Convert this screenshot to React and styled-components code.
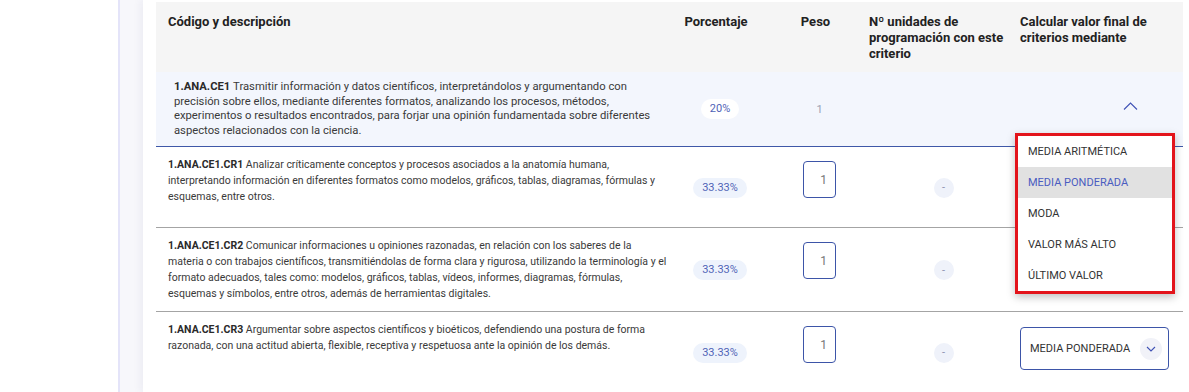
import React from "react";
import styled, { createGlobalStyle } from "styled-components";

const GlobalStyle = createGlobalStyle`
  html, body { margin: 0; padding: 0; background: #fff; }
  body { font-family: Roboto, "Liberation Sans", Arial, sans-serif; -webkit-font-smoothing: antialiased; }
  * { box-sizing: border-box; }
`;

const Page = styled.div`
  display: flex;
  height: 392px;
  overflow: hidden;
  background: #fff;
`;

const LeftBlank = styled.div`
  width: 118px;
  flex: none;
  background: #fff;
`;

const SidebarEdge = styled.div`
  width: 2px;
  flex: none;
  background: #e4e4f9;
`;

const Main = styled.div`
  flex: 1;
  display: flex;
  background: #f7f7fb;
  padding-left: 23px;
  min-width: 0;
`;

const Card = styled.div`
  flex: 1;
  background: #fff;
  box-shadow: -3px 0 8px rgba(40, 40, 90, 0.05);
  padding: 2px 6px 0 13px;
`;

const Table = styled.div`
  position: relative;
  width: 1027px;
`;

const cols = "514px 100px 99px 151px 163px";

const HeaderRow = styled.div`
  display: grid;
  grid-template-columns: ${cols};
  background: #f5f5f5;
  height: 70px;
  padding-top: 12px;
`;

const HeaderCell = styled.div`
  font-size: 13px;
  font-weight: 700;
  line-height: 16px;
  color: #222;
  text-align: ${(p) => p.$align || "left"};
  padding-left: ${(p) => p.$pl || 0}px;
  padding-right: 8px;
`;

const ParentRow = styled.div`
  display: grid;
  grid-template-columns: ${cols};
  align-items: center;
  background: #f3f6fd;
  height: 75px;
  border-bottom: 1px solid #3f58a8;
`;

const ChildRow = styled.div`
  display: grid;
  grid-template-columns: ${cols};
  min-height: 81px;
  padding: 10px 0 9px;
  border-bottom: 1px solid #a4a4a4;
`;

const Desc = styled.div`
  padding-left: ${(p) => p.$pl}px;
  font-size: ${(p) => p.$fs}px;
  line-height: ${(p) => p.$lh}px;
  color: #3a3a3a;
`;

const Line = styled.span`
  display: block;
  white-space: nowrap;
`;

const Code = styled.b`
  font-weight: 700;
  color: #2a2a2a;
`;

const Center = styled.div`
  display: flex;
  justify-content: center;
  align-items: center;
  align-self: ${(p) => p.$self || "center"};
`;

const Pill = styled.span`
  display: inline-block;
  font-size: 11px;
  line-height: 14px;
  padding: 3px 9px;
  border-radius: 11px;
  color: #5063b7;
  background: ${(p) => (p.$light ? "#eef3fc" : "#ffffff")};
`;

const PlainNum = styled.span`
  font-size: 11px;
  color: #9aa0b4;
`;

const NumBox = styled.input`
  width: 33px;
  height: 37px;
  margin-top: 4px;
  border: 1px solid #3d55a8;
  border-radius: 4px;
  background: #fff;
  text-align: right;
  padding: 0 8px 0 0;
  font-family: inherit;
  font-size: 12px;
  color: #777;
  outline: none;
`;

const Dash = styled.span`
  width: 20px;
  height: 20px;
  border-radius: 50%;
  background: #eff2fa;
  color: #8d93b0;
  font-size: 11px;
  display: flex;
  align-items: center;
  justify-content: center;
  margin-left: -2px;
`;

const CalcCell = styled.div`
  display: flex;
  justify-content: ${(p) => (p.$end ? "flex-end" : "flex-start")};
  align-self: ${(p) => (p.$end ? "center" : "start")};
  padding-right: ${(p) => (p.$end ? 45 : 0)}px;
  margin-top: ${(p) => (p.$end ? -6 : 0)}px;
`;

const Select = styled.div`
  width: 149px;
  height: 43px;
  margin-top: 5px;
  border: 1px solid #3d55a8;
  border-radius: 4px;
  display: flex;
  align-items: center;
  justify-content: space-between;
  padding: 0 6px 0 9px;
  font-size: 11px;
  color: #333;
  text-transform: uppercase;
  background: #fff;
`;

const ChevronBubble = styled.span`
  width: 22px;
  height: 22px;
  border-radius: 50%;
  background: #f1f2f8;
  display: flex;
  align-items: center;
  justify-content: center;
`;

const Menu = styled.ul`
  position: absolute;
  left: 859px;
  top: 131px;
  width: 160px;
  margin: 0;
  padding: 0;
  list-style: none;
  background: #fff;
  border: 3px solid #e3141b;
  box-shadow: 0 3px 8px rgba(0, 0, 0, 0.25);
  z-index: 5;
`;

const MenuItem = styled.li`
  height: 31px;
  display: flex;
  align-items: center;
  padding-left: 10px;
  font-size: 11px;
  color: ${(p) => (p.$active ? "#4a5cc0" : "#333")};
  background: ${(p) => (p.$active ? "#e1e1e1" : "transparent")};
  white-space: nowrap;
`;

const ChevronDown = () => (
  <svg width="10" height="6" viewBox="0 0 10 6" fill="none">
    <polyline points="1,1 5,5 9,1" stroke="#3f51b5" strokeWidth="1.1" />
  </svg>
);

const ChevronUp = () => (
  <svg width="15" height="8" viewBox="0 0 15 8" fill="none">
    <polyline points="1,7.5 7.5,1 14,7.5" stroke="#3f51b5" strokeWidth="1.1" />
  </svg>
);

const children = [
  {
    code: "1.ANA.CE1.CR1",
    lines: [
      "Analizar críticamente conceptos y procesos asociados a la anatomía humana,",
      "interpretando información en diferentes formatos como modelos, gráficos, tablas, diagramas, fórmulas y",
      "esquemas, entre otros.",
    ],
  },
  {
    code: "1.ANA.CE1.CR2",
    lines: [
      "Comunicar informaciones u opiniones razonadas, en relación con los saberes de la",
      "materia o con trabajos científicos, transmitiéndolas de forma clara y rigurosa, utilizando la terminología y el",
      "formato adecuados, tales como: modelos, gráficos, tablas, vídeos, informes, diagramas, fórmulas,",
      "esquemas y símbolos, entre otros, además de herramientas digitales.",
    ],
  },
  {
    code: "1.ANA.CE1.CR3",
    lines: [
      "Argumentar sobre aspectos científicos y bioéticos, defendiendo una postura de forma",
      "razonada, con una actitud abierta, flexible, receptiva y respetuosa ante la opinión de los demás.",
    ],
  },
];

const parentLines = [
  "Trasmitir información y datos científicos, interpretándolos y argumentando con",
  "precisión sobre ellos, mediante diferentes formatos, analizando los procesos, métodos,",
  "experimentos o resultados encontrados, para forjar una opinión fundamentada sobre diferentes",
  "aspectos relacionados con la ciencia.",
];

const options = ["MEDIA ARITMÉTICA", "MEDIA PONDERADA", "MODA", "VALOR MÁS ALTO", "ÚLTIMO VALOR"];

const Description = ({ code, lines, pl, lh, fs }) => (
  <Desc $pl={pl} $lh={lh} $fs={fs}>
    {lines.map((l, i) => (
      <Line key={i}>
        {i === 0 && <Code>{code} </Code>}
        {l}
      </Line>
    ))}
  </Desc>
);

export default function App() {
  return (
    <>
      <GlobalStyle />
      <Page>
        <LeftBlank />
        <SidebarEdge />
        <Main>
          <Card>
            <Table>
              <HeaderRow>
                <HeaderCell $pl={12}>Código y descripción</HeaderCell>
                <HeaderCell $align="center">Porcentaje</HeaderCell>
                <HeaderCell $align="center">Peso</HeaderCell>
                <HeaderCell>Nº unidades de programación con este criterio</HeaderCell>
                <HeaderCell>Calcular valor final de criterios mediante</HeaderCell>
              </HeaderRow>

              <ParentRow>
                <Description code="1.ANA.CE1" lines={parentLines} pl={18} lh={14.5} fs={11.25} />
                <Center>
                  <Pill>20%</Pill>
                </Center>
                <Center>
                  <PlainNum>1</PlainNum>
                </Center>
                <div />
                <CalcCell $end>
                  <ChevronUp />
                </CalcCell>
              </ParentRow>

              {children.map((c) => (
                <ChildRow key={c.code}>
                  <Description code={c.code} lines={c.lines} pl={12} lh={16} fs={10.5} />
                  <Center>
                    <Pill $light>33.33%</Pill>
                  </Center>
                  <Center $self="start">
                    <NumBox defaultValue="1" />
                  </Center>
                  <Center>
                    <Dash>-</Dash>
                  </Center>
                  <CalcCell>
                    <Select>
                      Media ponderada
                      <ChevronBubble>
                        <ChevronDown />
                      </ChevronBubble>
                    </Select>
                  </CalcCell>
                </ChildRow>
              ))}

              <Menu>
                {options.map((o) => (
                  <MenuItem key={o} $active={o === "MEDIA PONDERADA"}>
                    {o}
                  </MenuItem>
                ))}
              </Menu>
            </Table>
          </Card>
        </Main>
      </Page>
    </>
  );
}
